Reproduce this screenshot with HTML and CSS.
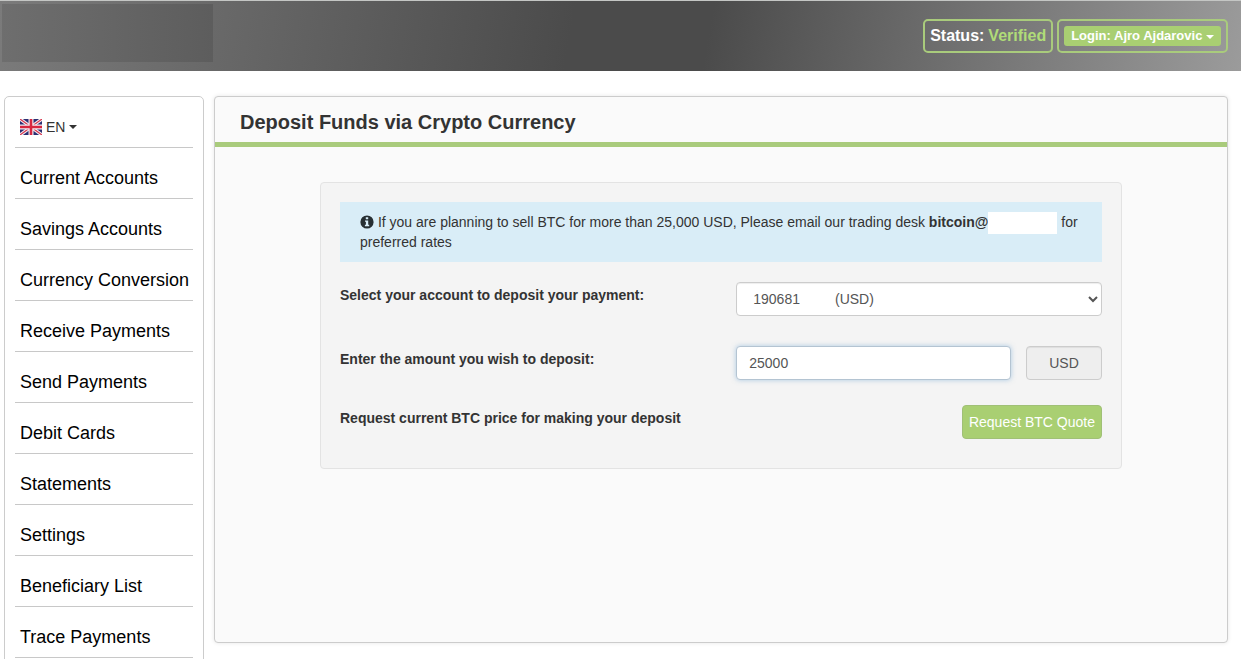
FILE: index.html
```html
<!DOCTYPE html>
<html lang="en">
<head>
    <meta charset="UTF-8">
    <meta name="viewport" content="width=device-width, initial-scale=1.0">
    <title>Deposit Funds via Crypto Currency</title>
    <link rel="stylesheet" href="styles.css">
</head>
<body>
    <header class="topbar">
        <div class="brand"></div>
        <div class="user-area">
            <div class="user-box">Status: <span class="verified">Verified</span></div>
            <div class="user-box">
                <button type="button" class="login-btn">Login: Ajro Ajdarovic <span class="caret"></span></button>
            </div>
        </div>
    </header>
    <div class="layout">
        <nav class="sidebar">
            <ul class="menu">
                <li>
                    <button type="button" class="lang-btn">
                        <svg class="flag" viewBox="0 0 22 16" width="22" height="16" aria-hidden="true">
                            <rect width="22" height="16" fill="#2b2f72"/>
                            <path d="M0 0L22 16M22 0L0 16" stroke="#f3eef3" stroke-width="3.4"/>
                            <path d="M0 0L22 16M22 0L0 16" stroke="#d8354c" stroke-width="1.2"/>
                            <path d="M11 0V16M0 8H22" stroke="#f3eef3" stroke-width="5"/>
                            <path d="M11 0V16M0 8H22" stroke="#d8263f" stroke-width="2.6"/>
                        </svg>
                        EN
                        <span class="caret"></span>
                    </button>
                </li>
                <li><a href="#">Current Accounts</a></li>
                <li><a href="#">Savings Accounts</a></li>
                <li><a href="#">Currency Conversion</a></li>
                <li><a href="#">Receive Payments</a></li>
                <li><a href="#">Send Payments</a></li>
                <li><a href="#">Debit Cards</a></li>
                <li><a href="#">Statements</a></li>
                <li><a href="#">Settings</a></li>
                <li><a href="#">Beneficiary List</a></li>
                <li><a href="#">Trace Payments</a></li>
            </ul>
        </nav>
        <main class="panel">
            <h1 class="panel-title">Deposit Funds via Crypto Currency</h1>
            <form class="well">
                <p class="info">
                    <svg class="info-icon" viewBox="0 0 14 14" width="14" height="14" aria-hidden="true">
                        <circle cx="7" cy="7" r="6.6" fill="#272f33"/>
                        <path d="M5.8 2.2H8.2V4.3H5.8ZM5 5.4H8.2V9.8H9.2V11.2H4.9V9.8H5.9V6.8H5Z" fill="#d9edf7"/>
                    </svg>
                    If you are planning to sell BTC for more than 25,000 USD, Please email our trading desk <b>bitcoin@</b><span class="blank"></span> for preferred rates
                </p>
                <div class="row">
                    <label for="account">Select your account to deposit your payment:</label>
                    <select id="account" class="control">
                        <option>190681&nbsp;&nbsp;&nbsp;&nbsp;&nbsp;&nbsp;&nbsp;&nbsp;&nbsp;(USD)</option>
                    </select>
                </div>
                <div class="row">
                    <label for="amount">Enter the amount you wish to deposit:</label>
                    <div class="amount">
                        <input type="text" id="amount" class="control active" value="25000">
                        <input type="text" class="control currency" value="USD" aria-label="Currency" readonly>
                    </div>
                </div>
                <div class="row">
                    <span class="row-text">Request current BTC price for making your deposit</span>
                    <button type="button" class="quote-btn">Request BTC Quote</button>
                </div>
            </form>
        </main>
    </div>
</body>
</html>
```

FILE: styles.css
```css
* {
    box-sizing: border-box;
}
html {
    scrollbar-width: none;
}
body {
    margin: 0;
    background: #fff;
    color: #333;
    font-family: "Liberation Sans", Arial, sans-serif;
    font-size: 14px;
    line-height: 20px;
}
.topbar {
    display: flex;
    justify-content: space-between;
    align-items: flex-start;
    height: 71px;
    padding: 3px 13px 0 2px;
    border-top: 1px solid #c4c6c4;
    background: linear-gradient(100deg, #7b7b7b 0%, #4b4b4b 46%, #4b4b4b 57%, #9b9b9b 100%);
}
.brand {
    width: 211px;
    height: 58px;
    background: linear-gradient(90deg, #6e6e6e, #5d5d5d);
}
.user-area {
    display: flex;
    gap: 4px;
    padding-top: 15px;
}
.user-box {
    display: flex;
    align-items: center;
    gap: 4px;
    height: 34px;
    padding: 0 5px;
    border: 2px solid #a9cb7c;
    border-radius: 5px;
    color: #fff;
    font-size: 16px;
    font-weight: bold;
}
.verified {
    color: #b0dc78;
}
.login-btn {
    height: 20px;
    padding: 0 7px;
    border: 0;
    border-radius: 3px;
    background: #a9cf72;
    color: #fff;
    font-family: inherit;
    font-size: 13px;
    font-weight: bold;
    line-height: 20px;
}
.caret {
    display: inline-block;
    border-top: 4px solid;
    border-left: 4px solid transparent;
    border-right: 4px solid transparent;
    vertical-align: middle;
}
.layout {
    display: flex;
    align-items: flex-start;
    gap: 10px;
    padding: 25px 13px 0 4px;
}
.sidebar {
    flex: 0 0 200px;
    width: 200px;
    padding: 0 10px 20px;
    border: 1px solid #ccc;
    border-radius: 5px;
}
.menu {
    margin: 0;
    padding: 0;
    list-style: none;
}
.menu li {
    height: 51px;
    padding: 20px 0 0 5px;
    border-bottom: 1px solid #c8c8c8;
    white-space: nowrap;
}
.menu a {
    color: #000;
    font-size: 18px;
    text-decoration: none;
}
.lang-btn {
    display: flex;
    align-items: center;
    gap: 4px;
    padding: 0;
    border: 0;
    background: none;
    color: #333;
    font-family: inherit;
    font-size: 14px;
    line-height: 20px;
}
.panel {
    flex: 1;
    min-width: 0;
    min-height: calc(100vh - 112px);
    border: 1px solid #ccc;
    border-radius: 4px;
    background: #fafafa;
    box-shadow: 0 0 4px rgba(0, 0, 0, 0.1);
}
.panel-title {
    margin: 0;
    padding: 15px 25px 10px;
    border-bottom: 5px solid #a9cb7c;
    font-size: 20px;
    line-height: 20px;
}
.well {
    margin: 35px 105px;
    padding: 19px 19px 29px;
    border: 1px solid #e3e3e3;
    border-radius: 4px;
    background: #f4f4f4;
}
.info {
    margin: 0 0 20px;
    padding: 10px 20px;
    background: #d9edf7;
}
.info-icon {
    vertical-align: -2px;
}
.blank {
    display: inline-block;
    width: 69px;
    height: 22px;
    margin: -3px 0;
    background: #fff;
    vertical-align: middle;
}
.row {
    display: flex;
    justify-content: space-between;
    align-items: flex-start;
    margin-bottom: 30px;
}
.row:last-child {
    margin: -5px 0 0;
}
.row label,
.row-text {
    padding-top: 3px;
    font-weight: bold;
}
.control {
    width: 48%;
    height: 34px;
    padding: 6px 12px;
    border: 1px solid #ccc;
    border-radius: 4px;
    background-color: #fff;
    color: #555;
    font-family: inherit;
    font-size: 14px;
    line-height: 20px;
    box-shadow: inset 0 1px 1px rgba(0, 0, 0, 0.07);
}
.amount {
    display: flex;
    gap: 15px;
    width: 48%;
}
.amount .control {
    flex: 1;
    min-width: 0;
}
.amount .active {
    border-color: #b4c4d2;
    box-shadow: 0 0 5px rgba(102, 160, 210, 0.5);
}
.amount .currency {
    flex: 0 0 76px;
    background: #eee;
    text-align: center;
}
.quote-btn {
    height: 34px;
    padding: 0 6px;
    border: 1px solid #a0c076;
    border-radius: 4px;
    background: #a9cf72;
    color: #fff;
    font-family: inherit;
    font-size: 14px;
    line-height: 20px;
}
```
